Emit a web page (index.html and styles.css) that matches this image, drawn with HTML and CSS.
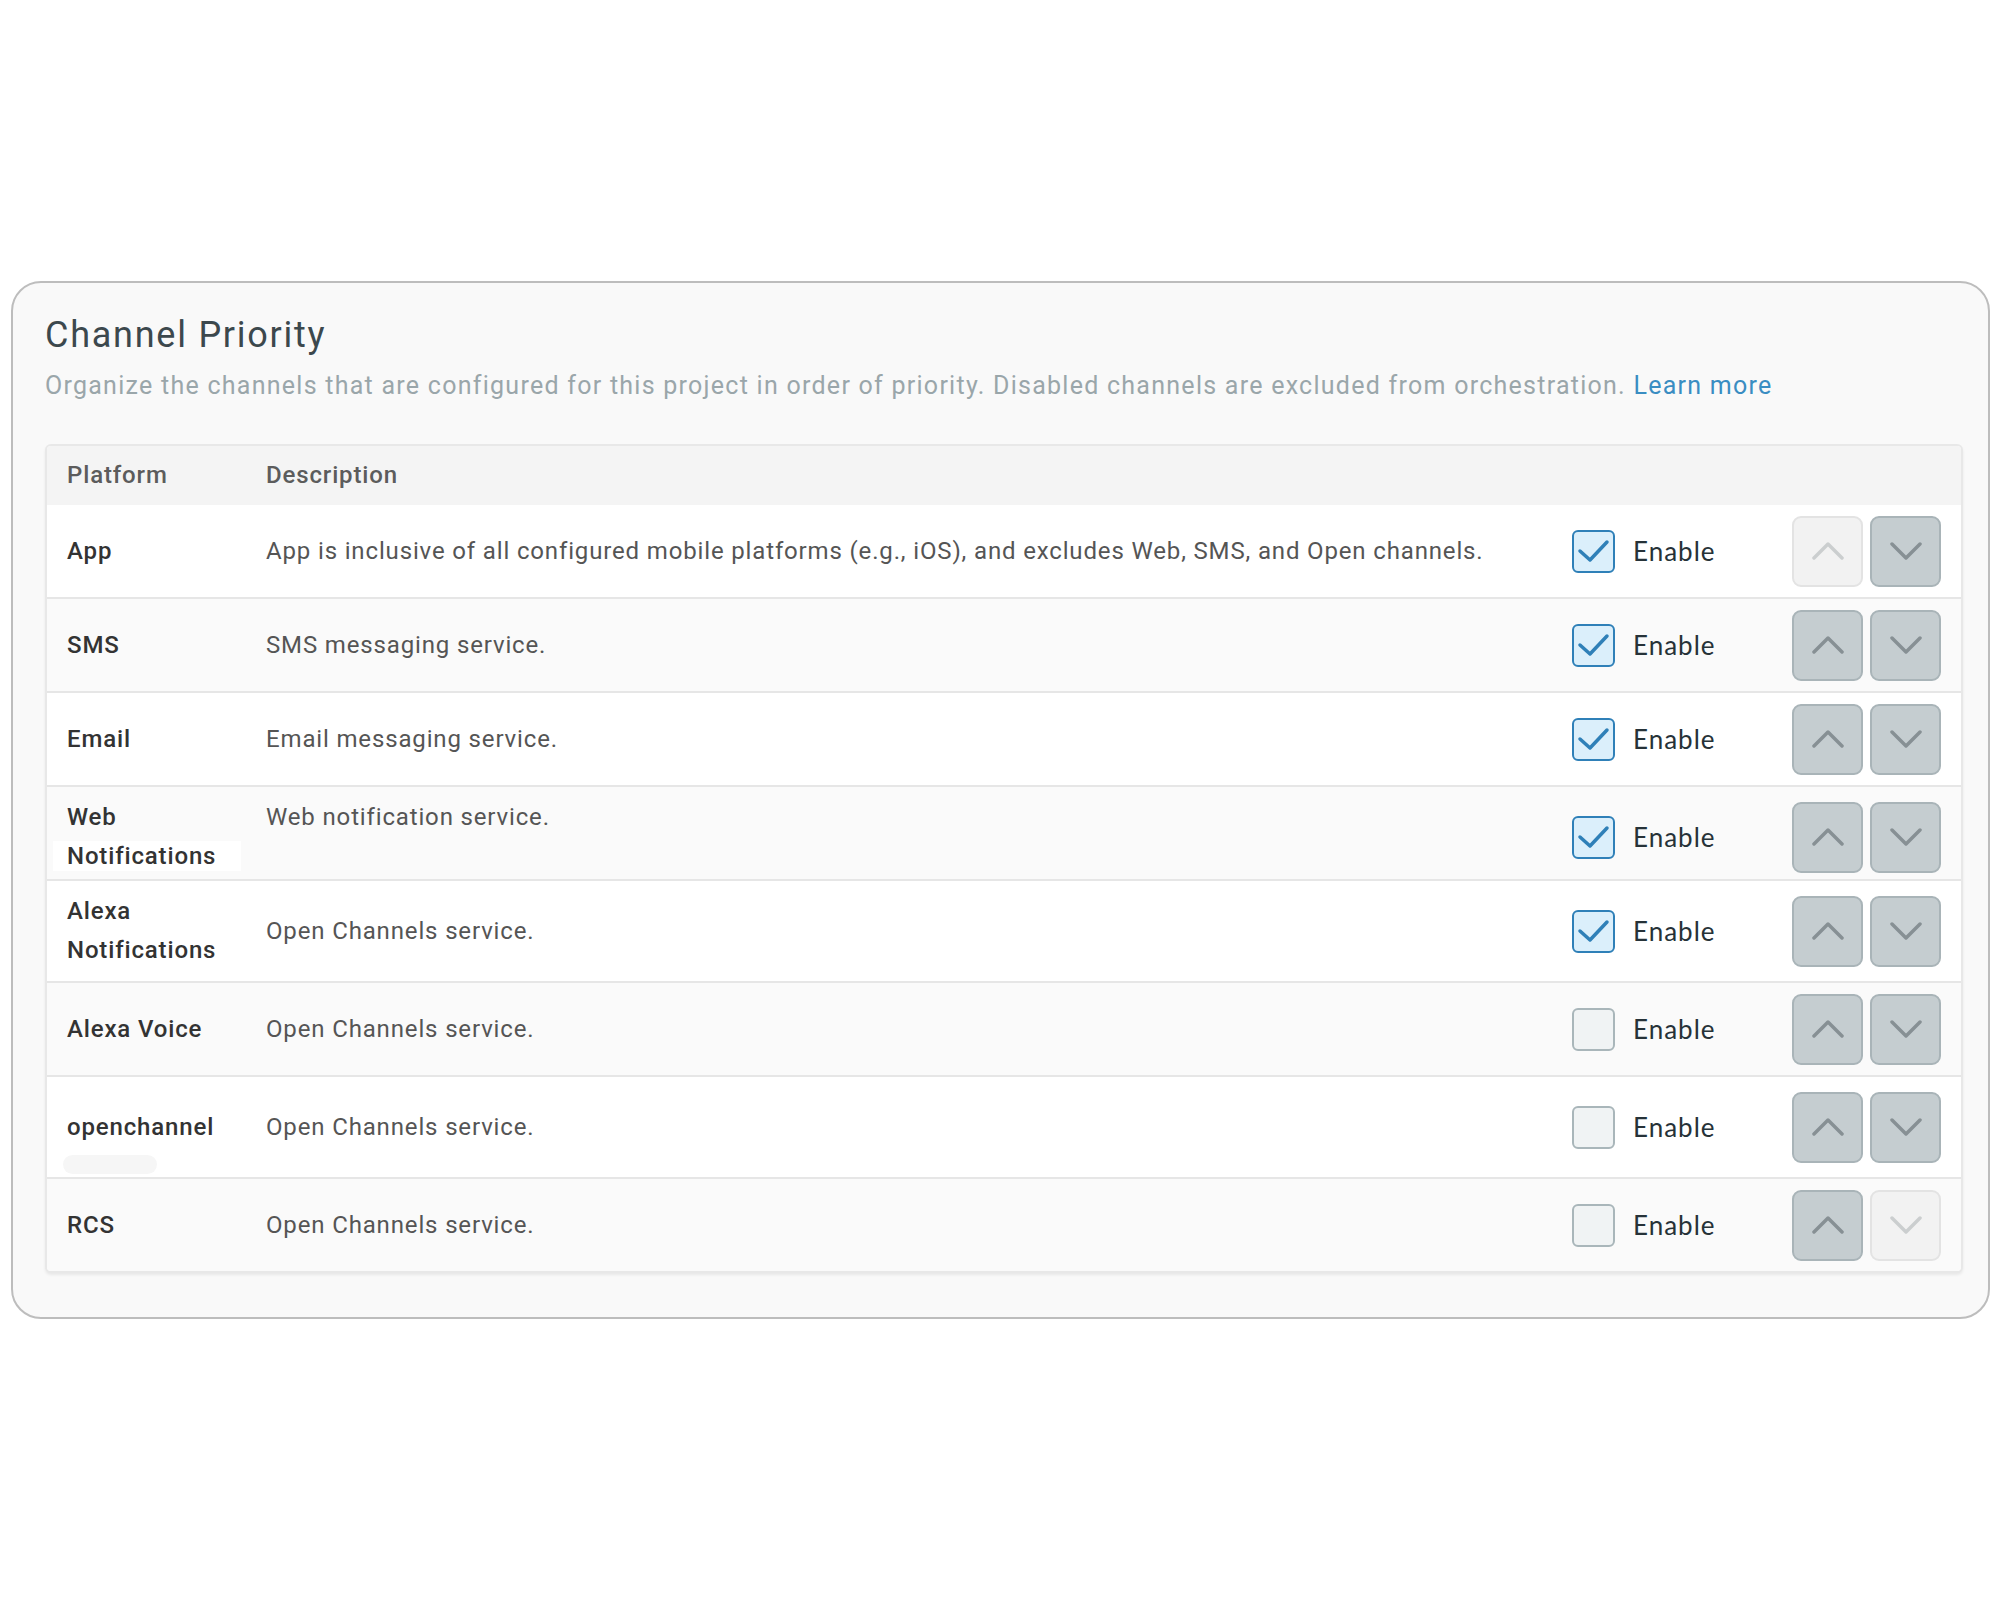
FILE: index.html
```html
<!DOCTYPE html>
<html>
<head>
    <title>Channel Priority</title>
    <link rel="stylesheet" href="styles.css">
</head>
<body>
    <div class="card">
        <h2 class="card-title">Channel Priority</h2>
        <p class="card-subtitle">Organize the channels that are configured for this project in order of priority. Disabled channels are excluded from orchestration. <a href="#">Learn more</a></p>

        <div class="priority-table">
            <div class="row head">
                <div>Platform</div>
                <div>Description</div>
                <div></div>
                <div></div>
            </div>

            <div class="row">
                <div class="platform">App</div>
                <div class="desc">App is inclusive of all configured mobile platforms (e.g., iOS), and excludes Web, SMS, and Open channels.</div>
                <label class="enable"><span class="check on"><svg viewBox="0 0 39 39"><polyline points="6,19 16,28 33,10"/></svg></span>Enable</label>
                <div class="move">
                    <button class="move-btn" disabled><svg viewBox="0 0 32 20"><polyline points="2,17 16,3 30,17"/></svg></button>
                    <button class="move-btn"><svg viewBox="0 0 32 20"><polyline points="2,3 16,17 30,3"/></svg></button>
                </div>
            </div>

            <div class="row">
                <div class="platform">SMS</div>
                <div class="desc">SMS messaging service.</div>
                <label class="enable"><span class="check on"><svg viewBox="0 0 39 39"><polyline points="6,19 16,28 33,10"/></svg></span>Enable</label>
                <div class="move">
                    <button class="move-btn"><svg viewBox="0 0 32 20"><polyline points="2,17 16,3 30,17"/></svg></button>
                    <button class="move-btn"><svg viewBox="0 0 32 20"><polyline points="2,3 16,17 30,3"/></svg></button>
                </div>
            </div>

            <div class="row">
                <div class="platform">Email</div>
                <div class="desc">Email messaging service.</div>
                <label class="enable"><span class="check on"><svg viewBox="0 0 39 39"><polyline points="6,19 16,28 33,10"/></svg></span>Enable</label>
                <div class="move">
                    <button class="move-btn"><svg viewBox="0 0 32 20"><polyline points="2,17 16,3 30,17"/></svg></button>
                    <button class="move-btn"><svg viewBox="0 0 32 20"><polyline points="2,3 16,17 30,3"/></svg></button>
                </div>
            </div>

            <div class="row top">
                <div class="platform">Web<br><span class="marked">Notifications</span></div>
                <div class="desc">Web notification service.</div>
                <label class="enable"><span class="check on"><svg viewBox="0 0 39 39"><polyline points="6,19 16,28 33,10"/></svg></span>Enable</label>
                <div class="move">
                    <button class="move-btn"><svg viewBox="0 0 32 20"><polyline points="2,17 16,3 30,17"/></svg></button>
                    <button class="move-btn"><svg viewBox="0 0 32 20"><polyline points="2,3 16,17 30,3"/></svg></button>
                </div>
            </div>

            <div class="row tall">
                <div class="platform">Alexa<br>Notifications</div>
                <div class="desc">Open Channels service.</div>
                <label class="enable"><span class="check on"><svg viewBox="0 0 39 39"><polyline points="6,19 16,28 33,10"/></svg></span>Enable</label>
                <div class="move">
                    <button class="move-btn"><svg viewBox="0 0 32 20"><polyline points="2,17 16,3 30,17"/></svg></button>
                    <button class="move-btn"><svg viewBox="0 0 32 20"><polyline points="2,3 16,17 30,3"/></svg></button>
                </div>
            </div>

            <div class="row">
                <div class="platform">Alexa Voice</div>
                <div class="desc">Open Channels service.</div>
                <label class="enable"><span class="check"></span>Enable</label>
                <div class="move">
                    <button class="move-btn"><svg viewBox="0 0 32 20"><polyline points="2,17 16,3 30,17"/></svg></button>
                    <button class="move-btn"><svg viewBox="0 0 32 20"><polyline points="2,3 16,17 30,3"/></svg></button>
                </div>
            </div>

            <div class="row tall">
                <div class="platform pill">openchannel</div>
                <div class="desc">Open Channels service.</div>
                <label class="enable"><span class="check"></span>Enable</label>
                <div class="move">
                    <button class="move-btn"><svg viewBox="0 0 32 20"><polyline points="2,17 16,3 30,17"/></svg></button>
                    <button class="move-btn"><svg viewBox="0 0 32 20"><polyline points="2,3 16,17 30,3"/></svg></button>
                </div>
            </div>

            <div class="row">
                <div class="platform">RCS</div>
                <div class="desc">Open Channels service.</div>
                <label class="enable"><span class="check"></span>Enable</label>
                <div class="move">
                    <button class="move-btn"><svg viewBox="0 0 32 20"><polyline points="2,17 16,3 30,17"/></svg></button>
                    <button class="move-btn" disabled><svg viewBox="0 0 32 20"><polyline points="2,3 16,17 30,3"/></svg></button>
                </div>
            </div>
        </div>
    </div>
</body>
</html>
```

FILE: styles.css
```css
body {
    font-family: 'Roboto', 'Liberation Sans', sans-serif;
    background-color: #fff;
    margin: 0;
    padding: 0;
}

.card {
    box-sizing: border-box;
    width: 1979px;
    margin: 281px 0 0 11px;
    padding: 31px 25px 44px 32px;
    background-color: #f9f9f9;
    border: 2px solid #bdbdbd;
    border-radius: 30px;
}

.card-title {
    margin: 0;
    font-size: 36px;
    line-height: 42px;
    font-weight: 400;
    letter-spacing: 1.75px;
    color: #3c484d;
}

.card-subtitle {
    margin: 15px 0 43px;
    font-size: 25px;
    line-height: 30px;
    letter-spacing: 1.26px;
    color: #9aa6aa;
}

.card-subtitle a {
    color: #3a8dc2;
    text-decoration: none;
}

.priority-table {
    background-color: #fff;
    border: 2px solid #e8e8e8;
    border-radius: 6px;
    overflow: hidden;
    box-shadow: 0 2px 3px rgba(0, 0, 0, 0.07);
}

.row {
    display: grid;
    grid-template-columns: 199px 1fr 220px 149px;
    align-items: center;
    min-height: 92px;
    padding: 0 20px;
    border-top: 2px solid #e6e6e6;
    font-size: 24px;
    line-height: 39px;
    letter-spacing: 0.85px;
}

.row:nth-child(odd) {
    background-color: #fafafa;
}

.row.head {
    min-height: 59px;
    border-top: none;
    background-color: #f4f4f4;
    font-weight: 500;
    color: #5c5c5c;
}

.row.head + .row {
    border-top: none;
}

.row.top {
    align-items: start;
    padding-top: 11px;
    padding-bottom: 3px;
    min-height: 0;
}

.row.top .enable,
.row.top .move {
    align-self: center;
}

.row.tall {
    min-height: 100px;
}

.platform {
    font-weight: 500;
    color: #333;
}

.marked {
    background-color: #fff;
    margin-left: -14px;
    padding: 1px 25px 1px 14px;
}

.pill {
    position: relative;
}

.pill::after {
    content: "";
    position: absolute;
    top: 47px;
    left: -4px;
    width: 94px;
    height: 19px;
    border-radius: 10px;
    background-color: #f6f6f6;
}

.desc {
    color: #555;
}

.enable {
    display: flex;
    align-items: center;
    gap: 18px;
    font-family: 'Lato', 'Open Sans', sans-serif;
    font-size: 26px;
    letter-spacing: 1px;
    color: #263238;
}

.check {
    box-sizing: border-box;
    width: 43px;
    height: 43px;
    border: 2px solid #a9b6ba;
    border-radius: 6px;
    background-color: #f0f3f4;
}

.check svg {
    display: block;
    width: 39px;
    height: 39px;
    fill: none;
    stroke: #2f80b8;
    stroke-width: 3.5;
    stroke-linecap: round;
    stroke-linejoin: round;
}

.check.on {
    border-color: #2f80b8;
    background-color: #dbeffb;
}

.move {
    display: flex;
    gap: 7px;
}

.move-btn {
    box-sizing: border-box;
    width: 71px;
    height: 71px;
    padding: 0;
    display: flex;
    align-items: center;
    justify-content: center;
    background-color: #c5cdd0;
    border: 2px solid #a9b4b8;
    border-radius: 9px;
    cursor: pointer;
}

.move-btn svg {
    width: 32px;
    height: 20px;
    fill: none;
    stroke: #879094;
    stroke-width: 3.5;
    stroke-linecap: round;
    stroke-linejoin: round;
}

.move-btn:disabled {
    background-color: #f2f2f2;
    border-color: #e3e3e3;
    cursor: default;
}

.move-btn:disabled svg {
    stroke: #cbcecf;
}
```
